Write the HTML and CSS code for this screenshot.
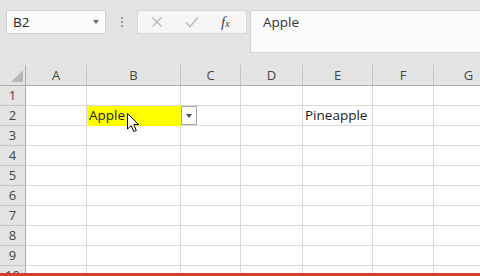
FILE: index.html
```html
<!DOCTYPE html>
<html lang="en">

<head>
  <meta charset="UTF-8">
  <meta name="viewport" content="width=device-width, initial-scale=1.0">
  <title>Data validation list</title>
  <link rel="stylesheet" href="styles.css">
</head>

<body>
  <div class="app">
    <!-- 名稱方塊 + 資料編輯列 -->
    <div class="toolbar">
      <div class="name-box">
        <span>B2</span>
        <span class="caret"></span>
      </div>
      <div class="grip">
        <i></i><i></i><i></i>
      </div>
      <div class="fx-buttons">
        <svg class="btn-cancel" width="12" height="12" viewBox="0 0 12 12">
          <path d="M1.5 1.5 L10.5 10.5 M10.5 1.5 L1.5 10.5" stroke="#bdbdbd" stroke-width="1.6" fill="none" />
        </svg>
        <svg class="btn-enter" width="14" height="12" viewBox="0 0 14 12">
          <path d="M1 6.5 L5 10.5 L13 1.5" stroke="#bdbdbd" stroke-width="1.6" fill="none" />
        </svg>
        <span class="fx">f<small>x</small></span>
      </div>
      <div class="formula-bar">Apple</div>
    </div>

    <!-- 工作表 -->
    <div class="sheet">
      <div class="cell corner"><span class="tri"></span></div>
      <div class="cell col-head">A</div>
      <div class="cell col-head">B</div>
      <div class="cell col-head">C</div>
      <div class="cell col-head">D</div>
      <div class="cell col-head">E</div>
      <div class="cell col-head">F</div>
      <div class="cell col-head">G</div>

      <div class="cell row-head">1</div>
      <div class="cell"></div><div class="cell"></div><div class="cell"></div><div class="cell"></div><div class="cell"></div><div class="cell"></div><div class="cell"></div>

      <div class="cell row-head">2</div>
      <div class="cell"></div>
      <div class="cell fill-yellow">Apple</div>
      <div class="cell"><span class="list-btn"></span></div>
      <div class="cell"></div>
      <div class="cell">Pineapple</div>
      <div class="cell"></div><div class="cell"></div>

      <div class="cell row-head">3</div>
      <div class="cell"></div><div class="cell"></div><div class="cell"></div><div class="cell"></div><div class="cell"></div><div class="cell"></div><div class="cell"></div>
      <div class="cell row-head">4</div>
      <div class="cell"></div><div class="cell"></div><div class="cell"></div><div class="cell"></div><div class="cell"></div><div class="cell"></div><div class="cell"></div>
      <div class="cell row-head">5</div>
      <div class="cell"></div><div class="cell"></div><div class="cell"></div><div class="cell"></div><div class="cell"></div><div class="cell"></div><div class="cell"></div>
      <div class="cell row-head">6</div>
      <div class="cell"></div><div class="cell"></div><div class="cell"></div><div class="cell"></div><div class="cell"></div><div class="cell"></div><div class="cell"></div>
      <div class="cell row-head">7</div>
      <div class="cell"></div><div class="cell"></div><div class="cell"></div><div class="cell"></div><div class="cell"></div><div class="cell"></div><div class="cell"></div>
      <div class="cell row-head">8</div>
      <div class="cell"></div><div class="cell"></div><div class="cell"></div><div class="cell"></div><div class="cell"></div><div class="cell"></div><div class="cell"></div>
      <div class="cell row-head">9</div>
      <div class="cell"></div><div class="cell"></div><div class="cell"></div><div class="cell"></div><div class="cell"></div><div class="cell"></div><div class="cell"></div>
      <div class="cell row-head">10</div>
      <div class="cell"></div><div class="cell"></div><div class="cell"></div><div class="cell"></div><div class="cell"></div><div class="cell"></div><div class="cell"></div>
    </div>

    <div class="status-edge"></div>

    <!-- 滑鼠游標 -->
    <svg class="cursor" width="14" height="20" viewBox="0 0 14 20">
      <path d="M0.5 0.5 L0.5 16 L4.2 12.6 L6.8 18.6 L9.3 17.5 L6.8 11.6 L11.6 11.6 Z" fill="#fff" stroke="#000" stroke-width="1" stroke-linejoin="miter" />
    </svg>
  </div>
</body>

</html>
```

FILE: styles.css
```css
* {
  margin: 0;
  padding: 0;
  box-sizing: border-box;
}

body {
  font-family: "Open Sans", "Noto Sans", sans-serif;
  color: #222;
  background: #e4e4e4;
}

.app {
  position: relative;
  width: 480px;
  height: 276px;
  display: flex;
  flex-direction: column;
  overflow: hidden;
}

/* 上方工具列 */
.toolbar {
  height: 65px;
  flex-shrink: 0;
  display: flex;
  align-items: flex-start;
  padding: 10px 0 0 6px;
  background: #e4e4e4;
}

/* 工具列項目不收縮，超出部分直接被裁掉 */
.toolbar > div {
  flex-shrink: 0;
}

.name-box {
  width: 100px;
  height: 24px;
  display: flex;
  align-items: center;
  justify-content: space-between;
  padding: 0 6px 0 6px;
  background: #fbfbfb;
  border: 1px solid #d2d2d2;
  font-size: 13.5px;
}

.caret {
  width: 0;
  height: 0;
  border-left: 3.5px solid transparent;
  border-right: 3.5px solid transparent;
  border-top: 4px solid #6a6a6a;
}

.grip {
  width: 31px;
  height: 24px;
  display: flex;
  flex-direction: column;
  align-items: center;
  justify-content: center;
  gap: 2px;
}

.grip i {
  width: 2px;
  height: 2px;
  background: #9a9a9a;
}

.fx-buttons {
  width: 110px;
  height: 24px;
  display: flex;
  align-items: center;
  padding-left: 13px;
  background: #f6f6f6;
  border: 1px solid #d6d6d6;
}

.btn-enter {
  margin-left: 22px;
}

.fx {
  margin-left: 22px;
  font-family: "Liberation Serif", serif;
  font-style: italic;
  font-size: 15px;
  color: #444;
  line-height: 1;
}

.fx small {
  font-size: 10px;
}

.formula-bar {
  width: 240px;
  height: 43px;
  margin-left: 3px;
  padding: 2px 0 0 12px;
  background: #fbfbfb;
  border: 1px solid #d2d2d2;
  border-right: none;
  font-size: 13.5px;
  line-height: 19px;
  color: #333;
}

/* 工作表格線 */
.sheet {
  flex: 1;
  display: grid;
  grid-template-columns: 26px 61px 94px 60px 62px 70px 61px 70px;
  grid-template-rows: 21px repeat(10, 20px);
  background: #fff;
  overflow: hidden;
}

.cell {
  display: flex;
  align-items: center;
  padding-left: 2px;
  border-right: 1px solid #dadada;
  border-bottom: 1px solid #dadada;
  font-size: 13.5px;
  line-height: 19px;
  white-space: nowrap;
}

.col-head,
.row-head,
.corner {
  background: #e4e4e4;
  color: #444;
  font-size: 13px;
  justify-content: center;
  padding-left: 0;
  border-color: #c4c4c4;
}

.col-head {
  border-bottom-color: #ababab;
}

.row-head {
  border-right-color: #ababab;
}

.corner {
  align-items: flex-end;
  justify-content: flex-end;
  padding: 0 2px 3px 0;
  border-bottom-color: #ababab;
  border-right-color: #ababab;
}

.tri {
  width: 0;
  height: 0;
  border-left: 12px solid transparent;
  border-bottom: 12px solid #b8b8b8;
}

.fill-yellow {
  background: #ffff00;
  border-color: #ffff00;
}

/* 下拉清單按鈕 */
.list-btn {
  width: 16px;
  height: 19px;
  margin-left: -2px;
  background: #fdfdfd;
  border: 1px solid #a6a6a6;
  position: relative;
}

.list-btn::after {
  content: "";
  position: absolute;
  left: 4px;
  top: 7px;
  border-left: 3.5px solid transparent;
  border-right: 3.5px solid transparent;
  border-top: 4px solid #555;
}

.status-edge {
  height: 3px;
  flex-shrink: 0;
  background: #d2402e;
}

.cursor {
  position: absolute;
  left: 127px;
  top: 113px;
}
```
